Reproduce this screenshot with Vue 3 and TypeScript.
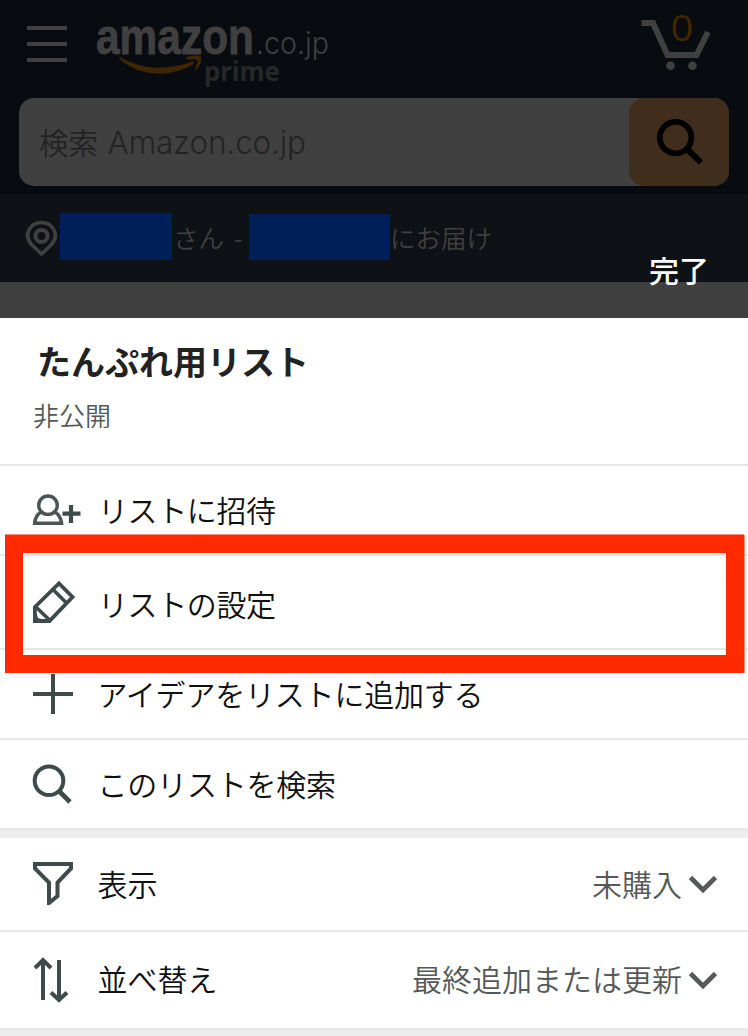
<script setup lang="ts">
interface Action {
  id: string
  label: string
}

interface Filter {
  id: string
  label: string
  value: string
}

const actions: Action[] = [
  { id: 'invite', label: 'リストに招待' },
  { id: 'settings', label: 'リストの設定' },
  { id: 'add', label: 'アイデアをリストに追加する' },
  { id: 'find', label: 'このリストを検索' },
]

const filters: Filter[] = [
  { id: 'display', label: '表示', value: '未購入' },
  { id: 'sort', label: '並べ替え', value: '最終追加または更新' },
]
</script>

<template>
  <main class="screen">
    <header class="nav">
      <div class="nav-top">
        <div class="burger"><i></i><i></i><i></i></div>
        <svg class="logo" width="240" height="98" viewBox="92 0 240 98">
          <text class="brand" x="96" y="53.500" textLength="158" lengthAdjust="spacingAndGlyphs">amazon</text>
          <text class="domain" x="256" y="54" textLength="73" lengthAdjust="spacingAndGlyphs">.co.jp</text>
          <text class="prime" x="204" y="81" textLength="76" lengthAdjust="spacingAndGlyphs">prime</text>
          <path class="smile" d="M120.500 57.300C142 70 168 70.500 192.500 61.500C194 61 195 62.500 193.500 64C172 77.500 140 77.500 119.300 59C118.500 58 119.500 56.800 120.500 57.300Z" />
          <path class="smile" d="M186.500 57.800C191 55 198 55.200 200.800 56.500C202 60 200 67 196 70C195 70.500 194.800 69.800 195.200 69C196.800 65 198 61.500 197 60.300C195.500 58.800 191 59.200 187.300 59.500C186 59.600 186 58.500 186.500 57.800Z" />
        </svg>
        <svg class="cart" width="72" height="60" viewBox="640 14 72 60">
          <path d="M641.500 23H653L667.500 55H696.500L708 32" fill="none" stroke="#404040" stroke-width="6" />
          <circle cx="670.500" cy="65.700" r="4.300" fill="#404040" />
          <circle cx="692.500" cy="65.700" r="4.300" fill="#404040" />
          <text class="count" x="670.500" y="40.700" textLength="23" lengthAdjust="spacingAndGlyphs">0</text>
        </svg>
      </div>
      <div class="search">
        <span class="placeholder">検索 <b>Amazon.co.jp</b></span>
        <div class="search-button">
          <svg width="50" height="50" viewBox="655 117 50 50" fill="none" stroke="#000">
            <circle cx="675.600" cy="137.600" r="15.800" stroke-width="5.800" />
            <path d="M686.500 148.500L701 162.700" stroke-width="6" />
          </svg>
        </div>
      </div>
    </header>
    <div class="delivery">
      <svg class="pin" width="34" height="38" viewBox="25 219 34 38" fill="none" stroke="#404040">
        <path d="M41.500 254L31.500 244.500C22.500 234 31 222.500 41.500 222.500S60.500 234 51.500 244.500Z" stroke-width="3.600" />
        <circle cx="41.500" cy="236" r="6" stroke-width="4" />
      </svg>
      <span class="mask mask-name"></span>
      <span class="san">さん -</span>
      <span class="mask mask-place"></span>
      <span class="to">にお届け</span>
      <span class="done">完了</span>
    </div>
    <div class="backdrop"></div>

    <section class="sheet">
      <div class="title-block">
        <h1>たんぷれ用リスト</h1>
        <p>非公開</p>
      </div>

      <div v-for="a in actions" :key="a.id" class="row" :class="`row-${a.id}`">
        <svg v-if="a.id === 'invite'" class="icon" width="50" height="34" viewBox="32 492 50 34" fill="none" stroke="#4b5555">
          <ellipse cx="48" cy="504.200" rx="9.300" ry="9.200" stroke-width="3.400" />
          <path d="M41.500 511C36.500 513.500 35 517 34.700 522.200H61.500C61 517 59.500 513.500 54.500 511" stroke-width="3.600" />
          <path d="M62.500 512.600H80.500M71 504V522" stroke="#3f4a4a" stroke-width="4.200" />
        </svg>
        <svg v-else-if="a.id === 'settings'" class="icon" width="44" height="44" viewBox="32 581 44 44" fill="none" stroke="#3f4a4a" stroke-width="3.800">
          <path d="M34.900 608L59 584.500L72.500 598L49.500 622H34.900Z" />
          <path d="M52.500 590L66.500 604M36.500 608.500L50 621.500" stroke-width="3.600" />
          <path d="M33 614L36.500 614L38 619L43 620.500V624H33Z" fill="#3f4a4a" stroke="none" />
        </svg>
        <svg v-else-if="a.id === 'add'" class="icon" width="42" height="42" viewBox="32 673 42 42" fill="none" stroke="#3f4a4a" stroke-width="4">
          <path d="M33 694H73M53 674V714" />
        </svg>
        <svg v-else class="icon" width="42" height="42" viewBox="32 762 42 42" fill="none" stroke="#3f4a4a" stroke-width="4">
          <circle cx="49" cy="779.700" r="14.300" />
          <path d="M59 790L70 801" stroke-width="4.600" />
        </svg>
        <span class="label">{{ a.label }}</span>
        <div v-if="a.id === 'settings'" class="highlight"></div>
      </div>

      <div class="gap"></div>

      <div v-for="f in filters" :key="f.id" class="row" :class="`row-${f.id}`">
        <svg v-if="f.id === 'display'" class="icon" width="42" height="44" viewBox="32 861 42 44" fill="none" stroke="#3f4a4a" stroke-width="4">
          <path d="M35 864H71V868.500L57.500 882.500V896L49 903V882.500L35 868.500Z" />
        </svg>
        <svg v-else class="icon" width="42" height="48" viewBox="32 956 42 48" fill="none" stroke="#3f4a4a" stroke-width="4">
          <path d="M43 1000V960M35 968L43 960L51 968M59 960V1000M51 992.500L59 1000L67 992.500" />
        </svg>
        <span class="label">{{ f.label }}</span>
        <span class="value">{{ f.value }}</span>
        <svg class="chevron" width="30" height="20" viewBox="0 0 30 20" fill="none" stroke="#565959" stroke-width="4.600">
          <path d="M2.500 2.500L15 15L27.500 2.500" />
        </svg>
      </div>
      <div class="gap"></div>
    </section>
  </main>
</template>

<style>
body {
  overflow: hidden;
}
</style>

<style scoped>
.screen {
  width: 748px;
  height: 1036px;
  overflow: hidden;
  background: #fff;
  color: #0f1111;
  font-family: "Noto Sans CJK JP", sans-serif;
}
.nav {
  height: 194px;
  background: #080b10;
}
.nav-top {
  display: flex;
  height: 98px;
}
.logo,
.cart {
  overflow: visible;
}
.burger {
  display: flex;
  flex-direction: column;
  gap: 12px;
  margin: 26px 25px 0 27px;
}
.burger i {
  width: 40px;
  height: 4px;
  background: #404040;
}
.cart {
  margin: 14px 36px 0 auto;
}
.brand {
  font: 700 50px "Liberation Sans", sans-serif;
  fill: #404040;
  stroke: #404040;
  stroke-width: 0.8px;
}
.domain {
  font: 300 31px Inter, sans-serif;
  fill: #404040;
}
.prime {
  font: 700 27px "Noto Sans", sans-serif;
  fill: #262728;
}
.smile {
  fill: #402600;
}
.count {
  font: 500 36.500px "Open Sans", sans-serif;
  fill: #402600;
}
.search {
  display: flex;
  justify-content: space-between;
  align-items: center;
  height: 88px;
  margin: 0 19px;
  border-radius: 15px;
  background: #404040;
}
.placeholder {
  margin: -2px 0 0 20px;
  font-size: 29.500px;
  font-weight: 350;
  line-height: 44px;
  color: #232323;
  white-space: nowrap;
}
.placeholder b {
  margin-left: 3px;
  font: 300 31.500px Inter, sans-serif;
  letter-spacing: -0.170px;
}
.search-button {
  width: 100px;
  height: 88px;
  border-radius: 15px;
  background: #402d1b;
}
.search-button svg {
  display: block;
  margin: 19px 0 0 26px;
}
.delivery {
  display: flex;
  height: 88px;
  background: #0e1116;
  color: #404040;
  font-size: 25.500px;
  font-weight: 350;
  line-height: 38px;
  white-space: nowrap;
}
.pin {
  margin: 25px 1px 0 25px;
}
.mask {
  background: #001e57;
}
.mask-name {
  width: 112px;
  height: 47px;
  margin-top: 19px;
}
.san {
  width: 77px;
  margin-top: 24px;
  text-indent: 1px;
  word-spacing: 4px;
}
.mask-place {
  width: 141px;
  height: 46px;
  margin-top: 20px;
}
.to {
  margin-top: 24px;
}
.done {
  margin: 56px 39px 0 auto;
  color: #fff;
  font-size: 30px;
  font-weight: 500;
}
.backdrop {
  height: 36px;
  background: #404040;
}
.title-block {
  box-sizing: border-box;
  height: 148px;
  border-bottom: 2px solid #e7e7e7;
}
h1 {
  margin: 0 0 0 37px;
  padding-top: 19px;
  font-size: 34px;
  font-weight: 700;
  line-height: 48px;
  color: #222;
}
p {
  margin: 12px 0 0 33px;
  font-size: 26px;
  font-weight: 350;
  line-height: 36px;
  color: #565959;
}
.row {
  position: relative;
  display: flex;
  align-items: center;
  box-sizing: border-box;
  height: 90px;
  padding: 0 30px 0 32px;
  border-bottom: 2px solid #e7e7e7;
  font-size: 30px;
  font-weight: 350;
  line-height: 44px;
}
.row-settings,
.row-display {
  height: 94px;
}
.row-sort {
  height: 98px;
}
.icon {
  flex: none;
  margin-right: 23.500px;
}
.label,
.value {
  margin-bottom: 2px;
}
.row-sort .label,
.row-sort .value {
  margin-bottom: 5px;
}
.row-invite .icon {
  margin-right: 16px;
}
.row-invite .label,
.row-settings .label {
  letter-spacing: -0.400px;
}
.row-add .label,
.row-find .label {
  letter-spacing: -0.200px;
}
.row-settings .icon {
  margin-right: 22px;
}
.row-settings .label {
  margin-bottom: -2px;
}
.row-display .icon {
  margin-bottom: 2px;
}
.row-display .chevron {
  margin-top: 2px;
}
.row-sort .chevron {
  margin-top: 2px;
}
.highlight {
  position: absolute;
  z-index: 1;
  left: 5px;
  top: -21px;
  box-sizing: border-box;
  width: 739px;
  height: 138px;
  border: 18px solid #ff2a00;
  box-shadow: 0 -1px 0 #ff8f7a, 1px 0 0 #ff8f7a;
}
.gap {
  height: 8px;
  background: #ededed;
}
.value {
  margin-left: auto;
  color: #565959;
}
.chevron {
  margin-left: 6px;
}
</style>
